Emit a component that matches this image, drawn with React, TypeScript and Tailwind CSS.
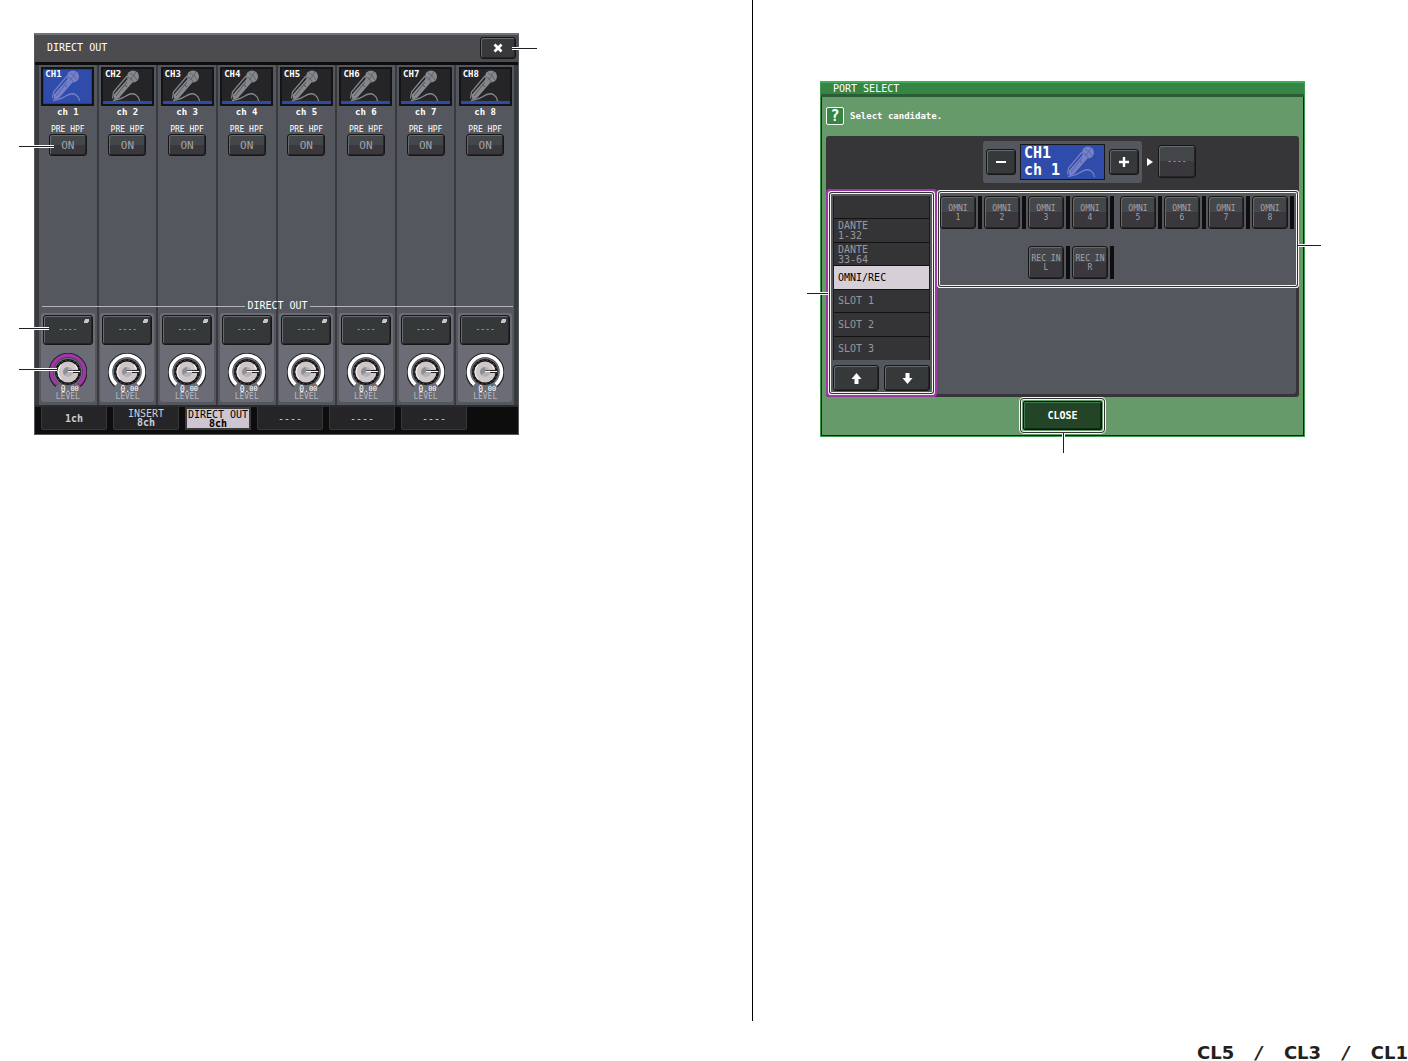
const CHANNELS = [1, 2, 3, 4, 5, 6, 7, 8];

const TABS = [
  { id: "1ch", lines: ["1ch"] },
  { id: "insert", lines: ["INSERT", "8ch"] },
  { id: "direct", lines: ["DIRECT OUT", "8ch"], active: true },
  { id: "t4", lines: ["----"] },
  { id: "t5", lines: ["----"] },
  { id: "t6", lines: ["----"] },
];

const SOURCES = [
  { id: "blank", lines: [""] },
  { id: "dante1", lines: ["DANTE", "1-32"] },
  { id: "dante33", lines: ["DANTE", "33-64"] },
  { id: "omni", lines: ["OMNI/REC"], active: true },
  { id: "slot1", lines: ["SLOT 1"] },
  { id: "slot2", lines: ["SLOT 2"] },
  { id: "slot3", lines: ["SLOT 3"] },
];

const BEVEL =
  "rounded-[3px] border border-[#161617] shadow-[inset_1px_1px_0_#66696d,inset_-1px_-1px_0_#242527]";
const TWO_TONE = "bg-linear-to-b from-[#43474a] from-50% to-[#3a383c] to-50%";
const FRAME = "shadow-[0_0_0_1px_#f4f4f0,0_0_0_2px_#333,0_0_0_3px_#f4f4f0]";

function Mic({ color, line }: { color: string; line: string }) {
  return (
    <svg viewBox="10 2 30 33" className="h-[33px] w-[30px] shrink-0" fill="none" aria-hidden="true">
      <path d="M26 9 L12.5 25 L11.5 31.5" stroke={color} strokeWidth="1.2" />
      <path d="M27 11.5 L31.5 15.5 L18 31 L13.5 33 L12.5 28 Z" fill={color} />
      <path d="M26 15 L15 29" stroke={line} strokeWidth="0.8" />
      <path d="M24 18 l2 2" stroke={line} strokeWidth="1" />
      <circle cx="32" cy="9.5" r="6" fill={color} />
      <path d="M26.5 10 Q30 10 33 15.5 M29 6 Q34 8 36 13 M35 4.5 Q32 10 29 13.5" stroke={line} strokeWidth="0.6" />
      <path d="M12 33.5 C17 32 19 33 24 29.5 S32 26 35 28 S38 31 38.5 34" stroke={color} strokeWidth="1.4" />
    </svg>
  );
}

function Knob({ color }: { color: string }) {
  return (
    <svg viewBox="0 0 38 35" className="h-[35px] w-[38px]" fill="none" aria-hidden="true">
      <path d="M8 32.2 A17 17 0 1 1 30 32.2" stroke="#25262a" strokeWidth="5" />
      <path d="M8.4 31.6 A16.5 16.5 0 1 1 29.6 31.6" stroke={color} strokeWidth="3.6" />
      <circle cx="19" cy="19" r="13" fill="#161618" />
      <circle cx="19" cy="19" r="12" stroke="#6b6d72" strokeWidth="0.8" strokeDasharray="1.5 2.6" />
      <circle cx="19" cy="19" r="10.5" fill="#cfc6c8" />
      <path d="M12 26 A10 10 0 0 1 12 12 M26 12 A10 10 0 0 1 28 16" stroke="#eee9ea" strokeWidth="1.5" />
      <circle cx="19" cy="19" r="5" fill="#b3b1b5" />
      <path d="M15 22 A5 5 0 0 1 19 14 L19 19 Z" fill="#8b8e92" />
      <path d="M19 17.5 H24" stroke="#4a4c50" strokeWidth="1" />
      <path d="M24 17.5 H31 M24 19.5 H31" stroke="#222" strokeWidth="1" />
      <path d="M19 18.5 H31" stroke="#fff" strokeWidth="1" />
    </svg>
  );
}

function Arrow({ className = "" }: { className?: string }) {
  return (
    <svg viewBox="0 0 11 11" className={`h-[11px] w-[11px] ${className}`} aria-hidden="true">
      <path d="M5.5 0 L10.5 6 H7.5 V11 H3.5 V6 H0.5 Z" fill="#fff" />
    </svg>
  );
}

function Callout({ className }: { className: string }) {
  return (
    <span
      className={`absolute z-10 h-px bg-[#231f20] shadow-[0_1px_0_white,0_-1px_0_white] ${className}`}
    />
  );
}

function ChannelStrip({ n }: { n: number }) {
  const selected = n === 1;
  return (
    <div className="flex flex-col items-center border-r-2 border-[#393a3e] bg-[#54575e] pt-[2px]">
      <div
        className={`relative h-[39px] w-[53px] border-2 border-[#141416] ${
          selected ? "bg-[#304cab] shadow-[inset_0_0_0_1px_#263d90]" : "bg-[#252528]"
        }`}
      >
        {!selected && <div className="absolute inset-x-0 bottom-0 h-[3px] bg-[#3049ad]" />}
        <div className="absolute top-0 left-[8px]">
          <Mic color={selected ? "#7580c6" : "#85888c"} line={selected ? "#4a59b0" : "#4b4d51"} />
        </div>
        <span className="absolute top-0 left-[2px] text-[9px] leading-[10px] font-bold text-white">
          CH{n}
        </span>
      </div>
      <span className="mt-px text-[9px] leading-[10px] font-bold text-white">ch {n}</span>
      <span className="mt-[8px] text-[8px] leading-[9px] text-white">PRE HPF</span>
      <button className={`h-[22px] w-[38px] text-[11px] leading-[11px] text-[#a3a1a8] ${BEVEL} ${TWO_TONE}`}>
        ON
      </button>
      <div className="mt-auto mb-[3px] flex w-[54px] flex-col items-center rounded-[3px] bg-[#6b6c76] pt-[2px] pb-px">
        <button
          className={`relative h-[30px] w-[50px] bg-[#353839] text-[8px] leading-[10px] text-[#b4b4b8] ${BEVEL}`}
        >
          ----
          <svg viewBox="0 0 5 4" className="absolute top-[3px] right-[3px] h-[4px] w-[5px]" aria-hidden="true">
            <path d="M1 0 H5 V3 H4 V4 H0 V1.5 H1 Z" fill="#c6c6ca" />
          </svg>
        </button>
        <div className="mt-[8px]">
          <Knob color={selected ? "#a136ab" : "#fff"} />
        </div>
        <span className="-mt-[2px] pl-1 text-[8px] leading-[7px] text-white">
          0.<span className="align-[1px] text-[7px]">00</span>
        </span>
        <span className="text-[8px] leading-[8px] text-[#b9b9c0]">LEVEL</span>
      </div>
    </div>
  );
}

function DirectOut() {
  return (
    <section className="relative w-full max-w-[485px] border border-t-2 border-[#55585c] border-t-[#707478] bg-[#0d0d0e]">
      <Callout className="top-[111px] -left-[16px] w-[35px]" />
      <Callout className="top-[293px] -left-[16px] w-[30px]" />
      <Callout className="top-[334px] -left-[16px] w-[38px]" />
      <Callout className="top-[13px] -right-[19px] w-[25px]" />
      <header className="flex h-[27px] items-center justify-between bg-[#4b4b50] pr-[2px] pb-px pl-[12px]">
        <h2 className="text-[10px] leading-[10px] text-white">DIRECT OUT</h2>
        <button
          aria-label="Close"
          className={`flex h-[22px] w-[36px] items-center justify-center bg-[#37393b] ${BEVEL}`}
        >
          <svg viewBox="0 0 10 10" className="h-[10px] w-[10px]" aria-hidden="true">
            <path d="M1.5 1.5 L8.5 8.5 M8.5 1.5 L1.5 8.5" stroke="#fff" strokeWidth="2.8" />
          </svg>
        </button>
      </header>
      <div className="relative mt-[3px] grid h-[340px] grid-cols-8 border-r-2 border-l-4 border-[#393a3e]">
        {CHANNELS.map((n) => (
          <ChannelStrip key={n} n={n} />
        ))}
        <div className="absolute inset-x-[3px] top-[236px] flex items-center gap-[2px] text-[10px] leading-[10px] text-white">
          <span className="h-px flex-1 bg-[#b4b5ba]" />
          DIRECT OUT
          <span className="h-px flex-1 bg-[#b4b5ba]" />
        </div>
      </div>
      <nav className="flex h-[29px] gap-[6px] border-t-2 border-[#2c2c2f] pl-[6px]">
        {TABS.map((t) => (
          <button
            key={t.id}
            className={`flex h-[23px] w-[66px] flex-col items-center justify-center text-[10px] leading-[9px] whitespace-nowrap ${
              t.active
                ? "border-2 border-[#3a3a3e] bg-[#cdc5cf] text-black"
                : "rounded-b-[2px] border border-t-0 border-[#38383b] bg-[#252528] text-[#cfced3]"
            }`}
          >
            {t.lines.map((l) => (
              <span key={l} className={l.endsWith("ch") ? "font-bold" : ""}>
                {l}
              </span>
            ))}
          </button>
        ))}
      </nav>
    </section>
  );
}

function Port({ name, sub, className = "" }: { name: string; sub: string; className?: string }) {
  return (
    <div className={`flex gap-[2px] ${className}`}>
      <button
        className={`flex h-[33px] w-[36px] flex-col items-center justify-center text-[8px] leading-[9px] whitespace-nowrap text-[#a3a1a8] ${BEVEL} ${TWO_TONE}`}
      >
        <span>{name}</span>
        <span>{sub}</span>
      </button>
      <span className="w-[4px] bg-[#0e0e0f]" />
    </div>
  );
}

function PortSelect() {
  return (
    <section className="relative w-full max-w-[485px] border border-t-2 border-[#3d9a50] border-t-[#3fae55] bg-[#669a6a]">
      <Callout className="top-[210px] -left-[14px] w-[21px]" />
      <Callout className="top-[162px] -right-[17px] w-[23px]" />
      <span className="absolute -bottom-[17px] left-1/2 z-10 h-[20px] w-px bg-[#231f20] shadow-[1px_0_0_white,-1px_0_0_white]" />
      <h2 className="h-[14px] border-b-3 border-[#2c5c35] bg-[#378545] pl-[12px] text-[10px] leading-[11px] text-white">
        PORT SELECT
      </h2>
      <div className="border border-t-0 border-[#15201a] px-[4px] pt-[10px]">
        <p className="flex items-center gap-[6px] text-[9px] leading-[10px] font-bold text-white">
          <span className="flex h-[18px] w-[18px] items-center justify-center rounded-[2px] border border-white bg-[#378545] text-[15px]">
            ?
          </span>
          Select candidate.
        </p>
        <div className="mt-[11px] rounded-[3px] bg-[#363538]">
          <div className="flex h-[53px] items-start pt-[5px] pl-[157px]">
            <div className="flex h-[42px] items-center gap-[4px] rounded-[3px] bg-[#54575e] px-[3px]">
              <button
                aria-label="Previous channel"
                className={`flex h-[26px] w-[30px] items-center justify-center bg-[#36393a] ${BEVEL}`}
              >
                <span className="h-[2px] w-[10px] bg-white" />
              </button>
              <div className="flex h-[36px] w-[85px] justify-between border border-[#17181c] bg-[#304cab] pr-[8px] pl-[3px] text-[15px] leading-[17px] font-bold whitespace-nowrap text-white">
                <div>
                  <div>CH1</div>
                  <div>ch 1</div>
                </div>
                <Mic color="#7580c6" line="#4a59b0" />
              </div>
              <button
                aria-label="Next channel"
                className={`flex h-[26px] w-[30px] items-center justify-center bg-[#36393a] ${BEVEL}`}
              >
                <svg viewBox="0 0 10 10" className="h-[10px] w-[10px]" aria-hidden="true">
                  <path d="M5 0 V10 M0 5 H10" stroke="#fff" strokeWidth="2.4" />
                </svg>
              </button>
            </div>
            <svg viewBox="0 0 6 8" className="mx-[5px] mt-[17px] h-[8px] w-[6px]" aria-hidden="true">
              <path d="M0 0 L6 4 L0 8 Z" fill="#fff" />
            </svg>
            <button
              className={`mt-[4px] h-[33px] w-[38px] text-[8px] leading-[10px] text-[#b4b4b8] ${BEVEL} ${TWO_TONE}`}
            >
              ----
            </button>
          </div>
          <div className="flex">
            <div className="m-[5px] w-[101px] shrink-0 rounded-[1px] bg-[#54575e] px-[2px] pt-[2px] pb-px shadow-[0_0_0_1px_#f4f4f0,0_0_0_2px_#333,0_0_0_3px_#f4f4f0,0_0_0_5px_#a136ab]">
              <ul className="grid h-[164px] grid-rows-7 divide-y divide-[#121213] border-x border-[#1c1c1e] bg-[#343436]">
                {SOURCES.map((s) => (
                  <li key={s.id} className="flex">
                    <button
                      aria-label={s.lines[0] || "Empty"}
                      className={`flex w-full flex-col items-start justify-center pt-px pl-[4px] text-[10px] leading-[10px] ${
                        s.active ? "bg-[#d7cfd8] text-black" : "text-[#99979e]"
                      }`}
                    >
                      {s.lines.map((l) => (
                        <span key={l}>{l}</span>
                      ))}
                    </button>
                  </li>
                ))}
              </ul>
              <div className="mt-[5px] grid grid-cols-2 gap-[5px]">
                <button
                  aria-label="Scroll up"
                  className={`flex h-[26px] items-center justify-center bg-[#36393a] ${BEVEL}`}
                >
                  <Arrow />
                </button>
                <button
                  aria-label="Scroll down"
                  className={`flex h-[26px] items-center justify-center bg-[#36393a] ${BEVEL}`}
                >
                  <Arrow className="rotate-180" />
                </button>
              </div>
            </div>
            <div className="flex min-w-0 flex-1 flex-col pb-[3px]">
              <div
                className={`mx-[3px] mt-[4px] mb-[3px] flex items-start gap-[6px] rounded-[1px] bg-[#54575e] pt-[3px] pb-[6px] ${FRAME}`}
              >
                <div className="grid grid-cols-4 gap-x-[2px] gap-y-[17px]">
                  <Port name="OMNI" sub="1" />
                  <Port name="OMNI" sub="2" />
                  <Port name="OMNI" sub="3" />
                  <Port name="OMNI" sub="4" />
                  <Port name="REC IN" sub="L" className="col-start-3" />
                  <Port name="REC IN" sub="R" />
                </div>
                <div className="grid grid-cols-4 gap-x-[2px]">
                  <Port name="OMNI" sub="5" />
                  <Port name="OMNI" sub="6" />
                  <Port name="OMNI" sub="7" />
                  <Port name="OMNI" sub="8" />
                </div>
              </div>
              <div className="mr-[3px] flex-1 rounded-br-[3px] bg-[#54575e]" />
            </div>
          </div>
        </div>
        <div className="flex justify-center pb-px">
          <div className={`m-[3px] rounded-[2px] p-px ${FRAME}`}>
            <button className="block h-[29px] w-[79px] rounded-[2px] border border-[#0c140e] bg-[#234427] text-[10px] leading-[10px] font-bold text-white shadow-[inset_1px_1px_0_#3f7a4d,inset_-1px_-1px_0_#142a18]">
              CLOSE
            </button>
          </div>
        </div>
      </div>
    </section>
  );
}

export default function App() {
  return (
    <div className="flex min-h-screen flex-col bg-white font-['DejaVu_Sans_Mono','Liberation_Mono',monospace]">
      <main className="grid flex-1 grid-cols-[47fr_41fr]">
        <div className="pt-[33px] pl-[34px]">
          <DirectOut />
        </div>
        <div className="border-l border-black pt-[81px] pl-[67px]">
          <PortSelect />
        </div>
      </main>
      <footer className="flex h-[40px] items-end justify-end">
        <div className="flex w-[211px] justify-between font-['DejaVu_Sans',sans-serif] text-[18px] leading-[16px] font-bold text-[#231f20]">
          <span>CL5</span>
          <span className="italic">/</span>
          <span>CL3</span>
          <span className="italic">/</span>
          <span>CL1</span>
        </div>
      </footer>
    </div>
  );
}
